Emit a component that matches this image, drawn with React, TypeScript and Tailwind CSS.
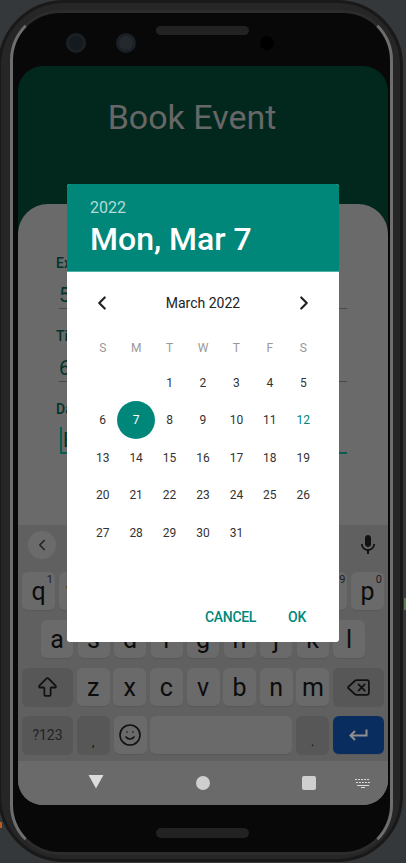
import { ArrowBigUp, ChevronLeft, ChevronRight, Delete, Smile } from "lucide-react";

const row1 = [
  ["q", "1"],
  ["w", "2"],
  ["e", "3"],
  ["r", "4"],
  ["t", "5"],
  ["y", "6"],
  ["u", "7"],
  ["i", "8"],
  ["o", "9"],
  ["p", "0"],
];
const row2 = ["a", "s", "d", "f", "g", "h", "j", "k", "l"];
const row3 = ["z", "x", "c", "v", "b", "n", "m"];
const weekdays = ["S", "M", "T", "W", "T", "F", "S"];
const days = [null, null, ...Array.from({ length: 31 }, (_, i) => i + 1)];

function Key({ children, className = "" }: { children?: React.ReactNode; className?: string }) {
  return (
    <div
      className={`relative flex items-center justify-center rounded-[6px] border-b border-[#585858] text-[25px] leading-none text-[#0c0c0c] ${className}`}
    >
      {children}
    </div>
  );
}

function Field({ label, value }: { label: string; value: string }) {
  return (
    <div className="ml-[38px] mr-[41px]">
      <p className="text-[14px] leading-[20px] font-medium text-[#02332a]">{label}</p>
      <div className="ml-[3px] mt-[9px] h-[27px] border-b border-[#4a4a4a] pt-[1px] text-[20px] leading-[24px] text-[#02332a]">
        {value}
      </div>
    </div>
  );
}

function Keyboard() {
  return (
    <div className="flex h-[236px] flex-col bg-[#606060]">
      <div className="flex h-[47px] items-start justify-between pl-[10px] pr-[7px] pt-[6px]">
        <div className="flex h-[28px] w-[28px] items-center justify-center rounded-full bg-[#6b6b6b]">
          <ChevronLeft size={18} strokeWidth={2.2} className="text-[#222]" />
        </div>
        <svg width="24" height="24" viewBox="0 0 24 24" className="mt-[2px] mr-[1px] fill-[#111]">
          <path d="M12 14c1.66 0 3-1.34 3-3V5c0-1.66-1.34-3-3-3S9 3.34 9 5v6c0 1.66 1.34 3 3 3zm5.3-3c0 3-2.54 5.1-5.3 5.1S6.7 14 6.7 11H5c0 3.41 2.72 6.23 6 6.72V21h2v-3.28c3.28-.48 6-3.3 6-6.72h-1.7z" />
        </svg>
      </div>
      <div className="flex flex-col gap-[9px] px-[4px]">
        <div className="flex h-[39px] justify-between">
          {row1.map(([k, n]) => (
            <Key key={k} className="w-[33px] bg-[#6a6a6a]">
              {k}
              <span className="absolute right-[2px] top-[2px] text-[11px] leading-none text-[#1c1c1c]">{n}</span>
            </Key>
          ))}
        </div>
        <div className="flex h-[39px] justify-between px-[19px]">
          {row2.map((k) => (
            <Key key={k} className="w-[32px] bg-[#6a6a6a]">
              {k}
            </Key>
          ))}
        </div>
        <div className="flex h-[39px] justify-between">
          <Key className="w-[51px] bg-[#575757]">
            <ArrowBigUp size={25} strokeWidth={1.7} className="text-[#111]" />
          </Key>
          {row3.map((k) => (
            <Key key={k} className="w-[33px] bg-[#6a6a6a]">
              {k}
            </Key>
          ))}
          <Key className="w-[51px] bg-[#575757]">
            <Delete size={25} strokeWidth={1.7} className="text-[#111]" />
          </Key>
        </div>
        <div className="flex h-[39px] justify-between">
          <Key className="w-[51px] whitespace-nowrap bg-[#575757] !text-[14px] text-[#222]">?123</Key>
          <Key className="w-[33px] bg-[#575757] !text-[12px]">
            <span className="mt-[14px]">,</span>
          </Key>
          <Key className="w-[33px] bg-[#6a6a6a]">
            <Smile size={24} strokeWidth={1.6} className="text-[#111]" />
          </Key>
          <Key className="w-[142px] bg-[#6a6a6a]" />
          <Key className="w-[33px] bg-[#575757] !text-[12px]">
            <span className="mt-[14px]">.</span>
          </Key>
          <Key className="w-[51px] border-[#0a2a58] bg-[#0a2d5f]">
            <svg width="20" height="14" viewBox="0 0 20 14" fill="none" stroke="#8f8f8f" strokeWidth="2">
              <path d="M18.5 1.5v6H2.5M7 3L2.5 7.5 7 12" />
            </svg>
          </Key>
        </div>
      </div>
    </div>
  );
}

function NavBar() {
  return (
    <div className="flex h-[44px] items-center bg-[#6a6a6a]">
      <svg width="16" height="15" viewBox="0 0 16 15" className="ml-[70px] mb-[3px] fill-[#dcdcdc]">
        <path d="M0.5 1h15L8 14.5z" />
      </svg>
      <div className="ml-[92px] h-[14px] w-[14px] rounded-full bg-[#cfcfcf]" />
      <div className="ml-[92px] h-[14px] w-[14px] rounded-[2px] bg-[#cfcfcf]" />
      <svg width="16" height="9" viewBox="0 0 16 9" className="ml-[39px] fill-[#d8d8d8]">
        <path d="M0 0h2v1H0zM3 0h2v1H3zM6 0h2v1H6zM9 0h2v1H9zM12 0h2v1h-2zM1 3h2v1H1zM4 3h2v1H4zM7 3h2v1H7zM10 3h2v1h-2zM13 3h2v1h-2zM2 6h12v1H2zM6 8h4v1H6z" />
      </svg>
    </div>
  );
}

function DatePicker() {
  return (
    <div className="absolute left-[67px] top-[184px] h-[458px] w-[272px] overflow-hidden rounded-[3px] bg-white font-['Roboto',sans-serif]">
      <div className="h-[88px] border-b border-[#4db1a6] bg-[#00877a] pl-[23px] pt-[14px]">
        <p className="text-[16px] leading-[20px] text-[#b2dcd7]">2022</p>
        <p className="mt-[1px] text-[32px] leading-[40px] font-medium text-white">Mon, Mar 7</p>
      </div>
      <div className="mt-[12px] flex h-[38px] items-center justify-between px-[24px] text-[#222]">
        <ChevronLeft size={22} strokeWidth={2.4} />
        <span className="text-[14px] font-normal">March 2022</span>
        <ChevronRight size={22} strokeWidth={2.4} />
      </div>
      <div className="grid grid-cols-7 px-[19px] pt-[14px] text-center">
        {weekdays.map((d, i) => (
          <div key={i} className="h-[24px] text-[12px] leading-[24px] text-[#999]">
            {d}
          </div>
        ))}
      </div>
      <div className="grid grid-cols-7 auto-rows-[37.5px] px-[19px] pt-[4px] text-center text-[12px] text-[#333]">
        {days.map((d, i) => (
          <div key={i} className="flex items-center justify-center">
            {d === 7 ? (
              <span className="flex h-[38px] w-[38px] shrink-0 items-center justify-center rounded-full bg-[#00877a] text-white">
                7
              </span>
            ) : (
              <span className={d === 12 ? "text-[#00877a]" : ""}>{d}</span>
            )}
          </div>
        ))}
      </div>
      <div className="absolute bottom-[14px] right-[33px] flex gap-[32px] text-[14px] leading-[22px] font-medium tracking-[-0.3px] text-[#00877a]">
        <span>CANCEL</span>
        <span>OK</span>
      </div>
    </div>
  );
}

export default function App() {
  return (
    <div className="relative h-[863px] w-[406px] overflow-hidden bg-[#35383a] font-['Roboto',sans-serif]">
      <div className="ml-[-2px] h-[862px] w-[405px] rounded-[66px] border-[3px] border-[#191919] bg-[#262626] pl-[9px] pr-[7px] pt-[7px]">
        <div className="h-[845px] rounded-[50px] border-[3px] border-x-[#6e6e6e] border-y-[#2c2c2c] bg-[#080808]">
          <div className="flex h-[53px] items-start">
            <div className="ml-[53px] mt-[20px] h-[20px] w-[20px] rounded-full border-[3px] border-[#1a2025] bg-[#141a1e]" />
            <div className="ml-[30px] mt-[20px] h-[20px] w-[20px] rounded-full border-[3px] border-[#1a2025] bg-[#23292d]" />
            <div className="ml-[20px] mt-[13px] h-[9px] w-[93px] rounded-full bg-[#222222]" />
            <div className="ml-[11px] mt-[23px] h-[14px] w-[14px] rounded-full bg-black" />
          </div>
          <div className="ml-[5px] w-[370px] overflow-hidden rounded-[25px] bg-[#02281e]">
            <div className="h-[138px] pr-[22px] pt-[28px] text-center">
              <h1 className="text-[34px] leading-[46px] font-normal text-[#676767]">Book Event</h1>
            </div>
            <div className="h-[601px] rounded-t-[30px] bg-[#6a6a6a]">
              <div className="flex h-[321px] flex-col gap-[17px] pt-[49px]">
                <Field label="Expected" value="5" />
                <Field label="Time" value="6" />
                <div className="ml-[38px] mr-[41px]">
                  <p className="text-[14px] leading-[20px] font-medium text-[#02332a]">Date</p>
                  <div className="ml-[4px] mt-[8px] h-[27px] border-b-2 border-l-2 border-[#0b5c50] pl-[1px] text-[20px] leading-[26px] text-[#02332a]">
                    E
                  </div>
                </div>
              </div>
              <Keyboard />
              <NavBar />
            </div>
          </div>
          <div className="ml-[143px] mt-[23px] h-[10px] w-[93px] rounded-full bg-[#222222]" />
        </div>
      </div>
      <DatePicker />
      <span className="absolute left-0 top-[822px] h-[6px] w-[2px] bg-[#c05a18]" />
      <span className="absolute right-0 top-[598px] h-[12px] w-[2px] bg-[#5c7a50]" />
    </div>
  );
}
